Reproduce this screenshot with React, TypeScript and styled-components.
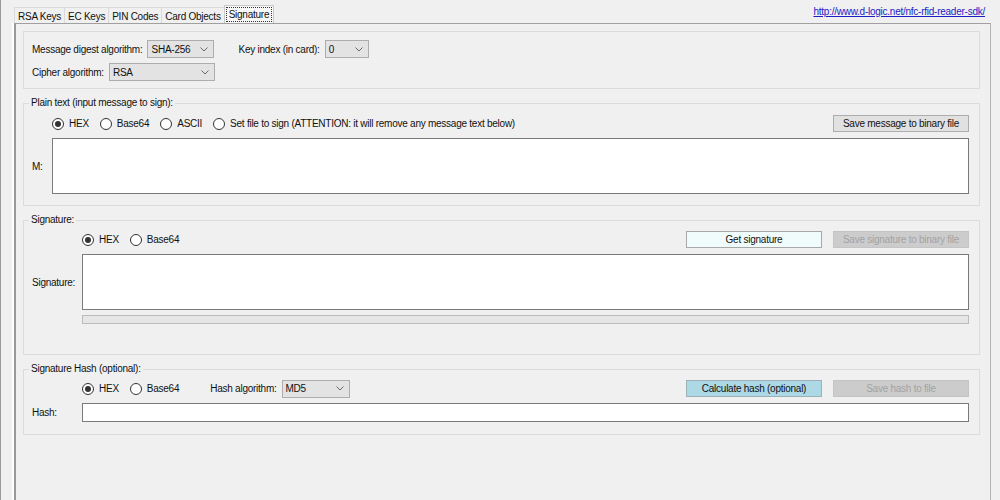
import styled, { createGlobalStyle } from "styled-components";

const GlobalStyle = createGlobalStyle`
  html, body {
    margin: 0;
    background: #f0f0f0;
    font-family: "Liberation Sans", Arial, sans-serif;
    font-size: 10px;
    letter-spacing: -0.25px;
    color: #111;
  }
  * { box-sizing: border-box; }
`;

const TABS = ["RSA Keys", "EC Keys", "PIN Codes", "Card Objects", "Signature"];

function Chevron() {
  return (
    <svg width="8" height="5" viewBox="0 0 8 5">
      <polyline points="0.5,0.5 4,4 7.5,0.5" fill="none" stroke="#6a6a6a" strokeWidth="1" />
    </svg>
  );
}

function Combo({ value, width }: { value: string; width: number }) {
  return (
    <ComboBox $w={width}>
      <span>{value}</span>
      <Chevron />
    </ComboBox>
  );
}

function Radio({ label, checked = false }: { label: string; checked?: boolean }) {
  return (
    <RadioItem>
      <Circle $checked={checked} />
      {label}
    </RadioItem>
  );
}

export default function App() {
  return (
    <Window>
      <GlobalStyle />
      <TabStrip>
        {TABS.map((t) => (
          <Tab key={t} $active={t === "Signature"}>
            {t === "Signature" ? <Focus>{t}</Focus> : t}
          </Tab>
        ))}
        <Link href="#">http://www.d-logic.net/nfc-rfid-reader-sdk/</Link>
      </TabStrip>

      <TabPanel>
        <PlainBox>
          <Line>
            <Label>Message digest algorithm:</Label>
            <Combo value="SHA-256" width={67} />
            <Label $gap={19}>Key index (in card):</Label>
            <Combo value="0" width={44} />
          </Line>
          <Line>
            <Label>Cipher algorithm:</Label>
            <Combo value="RSA" width={106} />
          </Line>
        </PlainBox>

        <Group $pt={6} $pb={11}>
          <Legend>Plain text (input message to sign):</Legend>
          <Form $label={21}>
            <span />
            <Controls>
              <Radio label="HEX" checked />
              <Radio label="Base64" />
              <Radio label="ASCII" />
              <Radio label="Set file to sign (ATTENTION: it will remove any message text below)" />
              <Buttons>
                <Button>Save message to binary file</Button>
              </Buttons>
            </Controls>
            <FieldLabel>M:</FieldLabel>
            <TextArea readOnly />
          </Form>
        </Group>

        <Group $pt={5} $pb={30}>
          <Legend>Signature:</Legend>
          <Form $label={51}>
            <span />
            <Controls>
              <Radio label="HEX" checked />
              <Radio label="Base64" />
              <Buttons>
                <Button $variant="azure">Get signature</Button>
                <Button $variant="disabled">Save signature to binary file</Button>
              </Buttons>
            </Controls>
            <FieldLabel>Signature:</FieldLabel>
            <TextArea readOnly />
            <span />
            <Progress />
          </Form>
        </Group>

        <Group $pt={5} $pb={12}>
          <Legend>Signature Hash (optional):</Legend>
          <Form $label={51}>
            <span />
            <Controls>
              <Radio label="HEX" checked />
              <Radio label="Base64" />
              <Line>
                <Label $gap={20}>Hash algorithm:</Label>
                <Combo value="MD5" width={68} />
              </Line>
              <Buttons>
                <Button $variant="blue">Calculate hash (optional)</Button>
                <Button $variant="disabled">Save hash to file</Button>
              </Buttons>
            </Controls>
            <FieldLabel>Hash:</FieldLabel>
            <Input readOnly />
          </Form>
        </Group>
      </TabPanel>
    </Window>
  );
}

const Window = styled.div`
  height: 500px;
  overflow: hidden;
  border-left: 1px solid #9a9a9a;
  padding: 5px 0 0 13px;
  display: flex;
  flex-direction: column;
`;

const TabStrip = styled.div`
  display: flex;
  align-items: flex-end;
  height: 18px;
  width: 977px;
`;

const Tab = styled.div<{ $active?: boolean }>`
  height: ${(p) => (p.$active ? 18 : 16)}px;
  padding: ${(p) => (p.$active ? "1px 1px" : "2px 3px 0")};
  margin-right: -1px;
  border: 1px solid ${(p) => (p.$active ? "#c8c8c8" : "#dadada")};
  border-bottom: none;
  background: ${(p) => (p.$active ? "#f7f7f7" : "#f0f0f0")};
  line-height: 13px;
  white-space: nowrap;
`;

const Focus = styled.span`
  display: block;
  padding: 0 2px;
  border: 1px dotted #333;
`;

const Link = styled.a`
  margin: 0 6px 5px auto;
  color: #1c1cc4;
  text-decoration: underline;
  line-height: 12px;
`;

const TabPanel = styled.div`
  flex: 1;
  width: 977px;
  border-top: 1px solid #a0a0a0;
  border-left: 2px solid #999;
  border-right: 1px solid #b4b4b4;
  box-shadow: -2px 0 0 #fff;
  padding: 7px 10px 0 7px;
  display: flex;
  flex-direction: column;
  gap: 8px;
`;

const PlainBox = styled.div`
  border: 1px solid #dcdcdc;
  padding: 8px 8px 7px;
  display: flex;
  flex-direction: column;
  gap: 5px;
`;

const Line = styled.div`
  display: flex;
  align-items: center;
  gap: 5px;
`;

const Label = styled.span<{ $gap?: number }>`
  margin-left: ${(p) => p.$gap ?? 0}px;
  white-space: nowrap;
`;

const ComboBox = styled.div<{ $w: number }>`
  width: ${(p) => p.$w}px;
  height: 18px;
  border: 1px solid #adadad;
  background: #e3e3e3;
  display: flex;
  align-items: center;
  justify-content: space-between;
  padding: 0 5px 0 3px;
`;

const Group = styled.fieldset<{ $pt: number; $pb: number }>`
  margin: 0;
  min-width: 0;
  border: 1px solid #dcdcdc;
  padding: ${(p) => p.$pt}px 10px ${(p) => p.$pb}px 7px;
`;

const Legend = styled.legend`
  margin-left: -2px;
  padding: 0 2px;
  line-height: 12px;
`;

const Form = styled.div<{ $label: number }>`
  display: grid;
  grid-template-columns: ${(p) => p.$label}px 1fr;
  row-gap: 6px;
  align-items: center;
`;

const Controls = styled.div`
  display: flex;
  align-items: center;
  gap: 11px;
  height: 17px;
`;

const RadioItem = styled.label`
  display: flex;
  align-items: center;
  gap: 5px;
  white-space: nowrap;
`;

const Circle = styled.span<{ $checked: boolean }>`
  width: 12px;
  height: 12px;
  border-radius: 50%;
  border: 1px solid #333;
  background: #fff;
  display: flex;
  align-items: center;
  justify-content: center;

  &::after {
    content: "";
    width: 6px;
    height: 6px;
    border-radius: 50%;
    background: ${(p) => (p.$checked ? "#333" : "transparent")};
  }
`;

const Buttons = styled.div`
  margin-left: auto;
  display: flex;
  gap: 11px;
`;

const variants = {
  normal: { bg: "#e1e1e1", border: "#adadad", color: "#111" },
  azure: { bg: "#f0fcfc", border: "#a8a8a8", color: "#111" },
  blue: { bg: "#add8e6", border: "#9cb0b8", color: "#111" },
  disabled: { bg: "#cccccc", border: "#c4c4c4", color: "#a3a3a3" },
};

const Button = styled.div<{ $variant?: keyof typeof variants }>`
  width: 136px;
  height: 17px;
  border: 1px solid ${(p) => variants[p.$variant ?? "normal"].border};
  background: ${(p) => variants[p.$variant ?? "normal"].bg};
  color: ${(p) => variants[p.$variant ?? "normal"].color};
  display: flex;
  align-items: center;
  justify-content: center;
  white-space: nowrap;
`;

const FieldLabel = styled.span`
  padding-left: 1px;
`;

const TextArea = styled.textarea`
  display: block;
  width: 100%;
  height: 56px;
  margin: 0;
  border: 1px solid #7a7a7a;
  background: #fff;
  resize: none;
  outline: none;
`;

const Input = styled.input`
  display: block;
  width: 100%;
  height: 19px;
  margin: 0;
  border: 1px solid #7a7a7a;
  background: #fff;
  outline: none;
`;

const Progress = styled.div`
  height: 9px;
  margin-top: -1px;
  border: 1px solid #bcbcbc;
  background: #e6e6e6;
`;
